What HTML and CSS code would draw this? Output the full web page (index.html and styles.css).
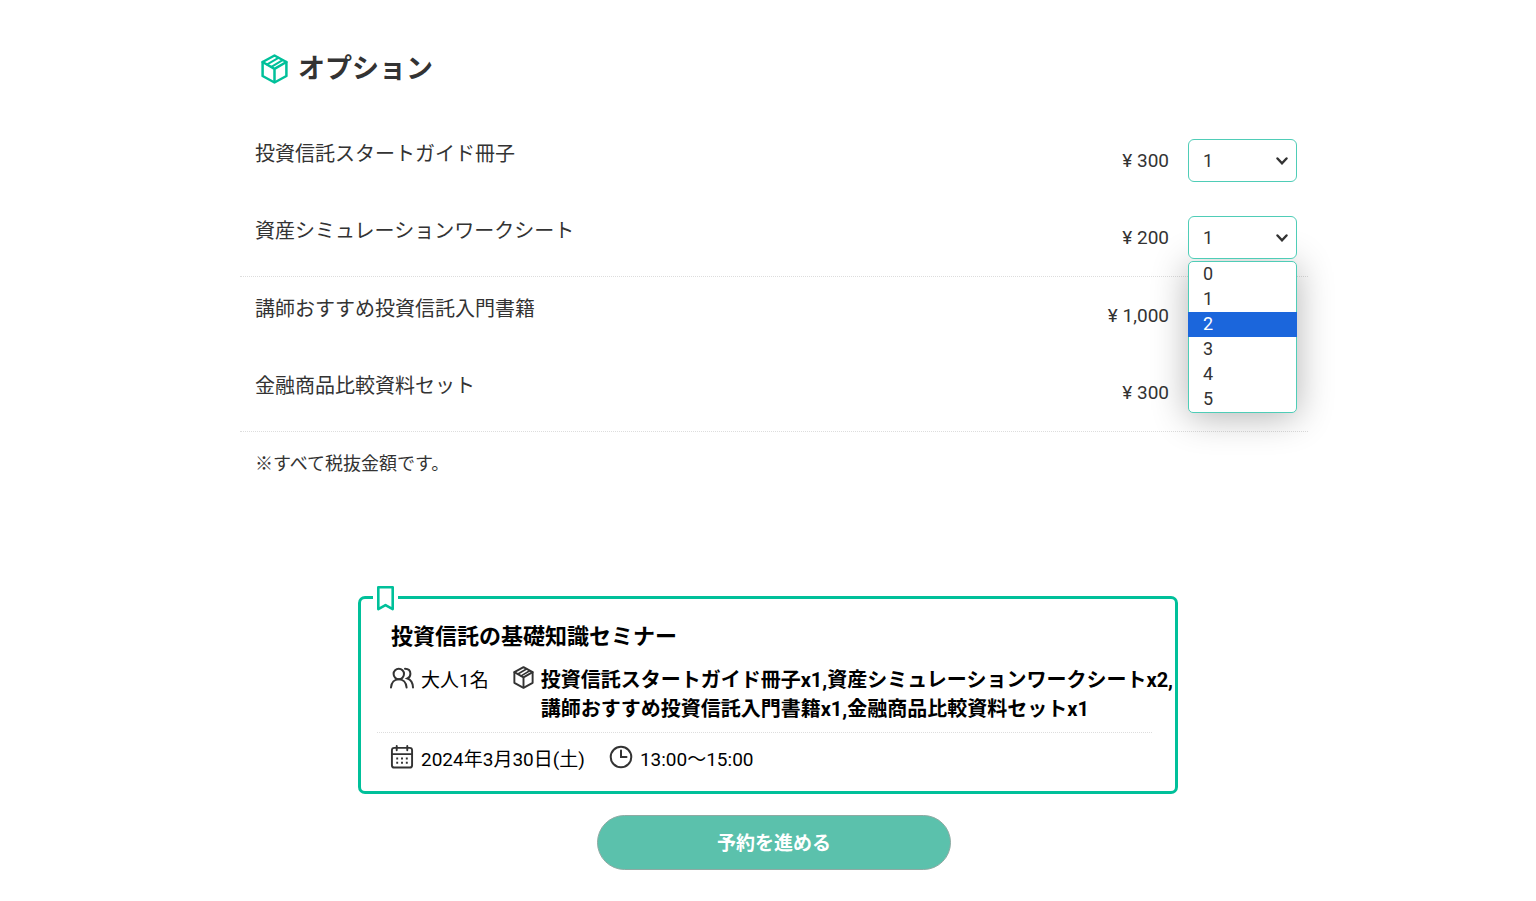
FILE: index.html
```html
<!DOCTYPE html>
<html lang="ja">
<head>
  <meta charset="UTF-8">
  <meta name="viewport" content="width=device-width, initial-scale=1.0">
  <title>オプション</title>
  <link rel="stylesheet" href="styles.css">
</head>
<body>
  <svg class="sprite" width="0" height="0" aria-hidden="true">
    <symbol id="box" viewBox="0 0 27 30">
      <g fill="none" stroke="currentColor" stroke-width="2.5" stroke-linejoin="round" stroke-linecap="round">
        <path d="M13.5 1.5 25.4 8v14L13.5 28.5 1.6 22V8z"/>
        <path d="M1.6 8l11.9 6.8L25.4 8M13.5 14.8v13"/>
        <path stroke-width="2" d="M6.2 10.4 17.400 3.900M10.400 12.800 21.600 6.200"/>
      </g>
    </symbol>
  </svg>

  <main>
    <section class="options">
      <h1>
        <svg class="title-icon" aria-hidden="true"><use href="#box"/></svg>
        オプション
      </h1>
      <ul class="option-list">
        <li>
          <label class="name" for="guide">投資信託スタートガイド冊子</label>
          <span class="price">¥ 300</span>
          <div class="quantity">
            <select id="guide">
              <option>0</option>
              <option selected>1</option>
              <option>2</option>
              <option>3</option>
              <option>4</option>
              <option>5</option>
            </select>
            <svg class="arrow" viewBox="0 0 12 8" aria-hidden="true"><path d="M1.5 1.5 6 6.3l4.5-4.8"/></svg>
          </div>
        </li>
        <li>
          <label class="name" for="worksheet">資産シミュレーションワークシート</label>
          <span class="price">¥ 200</span>
          <div class="quantity">
            <select id="worksheet">
              <option>0</option>
              <option selected>1</option>
              <option>2</option>
              <option>3</option>
              <option>4</option>
              <option>5</option>
            </select>
            <svg class="arrow" viewBox="0 0 12 8" aria-hidden="true"><path d="M1.5 1.5 6 6.3l4.5-4.8"/></svg>
            <ul class="menu" role="listbox" aria-label="数量">
              <li role="option">0</li>
              <li role="option">1</li>
              <li role="option" class="active" aria-selected="true">2</li>
              <li role="option">3</li>
              <li role="option">4</li>
              <li role="option">5</li>
            </ul>
          </div>
        </li>
        <li>
          <span class="name">講師おすすめ投資信託入門書籍</span>
          <span class="price">¥ 1,000</span>
        </li>
        <li>
          <span class="name">金融商品比較資料セット</span>
          <span class="price">¥ 300</span>
        </li>
      </ul>
      <p class="note">※すべて税抜金額です。</p>
    </section>

    <section class="summary">
      <span class="bookmark">
        <svg viewBox="0 0 17 25" aria-hidden="true"><path d="M1.3 1.3h14.4v21.8l-7.2-4-7.2 4z"/></svg>
      </span>
      <h2>投資信託の基礎知識セミナー</h2>
      <div class="row">
        <div class="item people">
          <svg class="icon" viewBox="0 0 24 24" aria-hidden="true">
            <circle cx="8.800" cy="8" r="5.200"/>
            <path d="M1 21.500c.4-5 3.600-8.300 7.800-8.300s7.400 3.300 7.800 8.300M15 2.800c3.500 0 5.400 2.200 5.400 5 0 2.200-1.200 3.900-3 4.700 3.400 1.200 5.400 4.500 5.600 9"/>
          </svg>
          <span>大人1名</span>
        </div>
        <div class="item">
          <svg class="icon box" aria-hidden="true"><use href="#box"/></svg>
          <strong>投資信託スタートガイド冊子x1,資産シミュレーションワークシートx2,講師おすすめ投資信託入門書籍x1,金融商品比較資料セットx1</strong>
        </div>
      </div>
      <div class="row schedule">
        <div class="item">
          <svg class="icon" viewBox="0 0 24 25" aria-hidden="true">
            <rect x="1.5" y="3" width="21" height="20.5" rx="2.5"/>
            <path d="M2 9.5h20M6.5 1v4.5M17.5 1v4.5"/>
            <path class="dots" d="M6 14h2m3 0h2m3 0h2M6 18.5h2m3 0h2m3 0h2"/>
          </svg>
          <span>2024年3月30日(土)</span>
        </div>
        <div class="item">
          <svg class="icon" viewBox="0 0 24 24" aria-hidden="true">
            <circle cx="12" cy="12" r="10.3"/>
            <path d="M12 5.5V12h5.5"/>
          </svg>
          <span>13:00〜15:00</span>
        </div>
      </div>
    </section>

    <div class="actions">
      <button type="button">予約を進める</button>
    </div>
  </main>
</body>
</html>
```

FILE: styles.css
```css
* {
  box-sizing: border-box;
}

body {
  margin: 0;
  background-color: #fff;
  color: #333;
  font-family: Roboto, "Noto Sans CJK JP", sans-serif;
  font-size: 20px;
  line-height: 30px;
}

h1, h2, p, ul {
  margin: 0;
  padding: 0;
}

ul {
  list-style: none;
}

.sprite {
  position: absolute;
}

main {
  padding-top: 49px;
}

.options,
.actions {
  max-width: 1080px;
  margin: 0 auto;
  padding-left: 12px;
}

h1 {
  display: flex;
  align-items: center;
  gap: 10px;
  margin-bottom: 33px;
  padding-left: 21px;
  font-size: 27px;
  line-height: 40px;
}

.title-icon {
  width: 27px;
  height: 30px;
  color: #00c09a;
}

/* option rows */
.option-list > li {
  display: grid;
  grid-template-columns: 1fr auto 109px;
  column-gap: 19px;
  min-height: 77px;
  padding: 17px 11px 17px 15px;
}

.option-list > li:nth-child(even) {
  min-height: 78px;
  border-bottom: 1px dotted #ddd;
}

.price {
  align-self: center;
  font-size: 19px;
}

.quantity {
  position: relative;
  height: 43px;
}

select {
  position: relative;
  z-index: 2;
  display: block;
  width: 100%;
  height: 43px;
  padding: 0 14px;
  border: 1px solid #4fcdb7;
  border-radius: 6px;
  background-color: #fff;
  color: #333;
  font-family: inherit;
  font-size: 18px;
  appearance: none;
}

.arrow {
  position: absolute;
  top: 18px;
  right: 9px;
  z-index: 3;
  width: 12px;
  height: 8px;
  fill: none;
  stroke: #333;
  stroke-width: 2.4;
  stroke-linecap: round;
  pointer-events: none;
}

.menu {
  position: absolute;
  top: 45px;
  left: 0;
  z-index: 1;
  width: 100%;
  border: 1px solid #4fcdb7;
  border-radius: 5px;
  background-color: #fff;
  box-shadow: 0 4px 36px rgba(0, 0, 0, 0.3);
  font-size: 18px;
}

.menu li {
  height: 25px;
  padding-left: 14px;
  line-height: 24px;
}

.menu .active {
  margin: 0 -1px;
  padding-left: 15px;
  background-color: #1b66dc;
  color: #fff;
}

.note {
  margin-top: 17px;
  padding-left: 15px;
  font-size: 18px;
}

/* reservation summary */
.summary {
  position: relative;
  max-width: 820px;
  margin: 117px auto 0;
  padding: 22px 0 17px 16px;
  border: 3px solid #00c09a;
  border-radius: 7px;
  color: #000;
}

.bookmark {
  position: absolute;
  top: -13px;
  left: 12px;
  display: flex;
  padding: 0 4px;
  background-color: #fff;
}

.bookmark svg {
  width: 17px;
  height: 25px;
  fill: none;
  stroke: #00c09a;
  stroke-width: 2.6;
  stroke-linejoin: round;
}

h2 {
  margin-bottom: 13px;
  padding-left: 14px;
  font-size: 22px;
  line-height: 32px;
}

.row {
  display: flex;
  gap: 24px;
  padding-left: 13px;
  font-size: 19px;
  line-height: 29px;
}

.item {
  display: flex;
  gap: 7px;
}

.item strong {
  font-size: 20px;
}

.people {
  flex-shrink: 0;
}

.schedule {
  margin-top: 8px;
  margin-right: 23px;
  padding-top: 12px;
  border-top: 1px dotted #ddd;
}

.icon {
  flex-shrink: 0;
  width: 24px;
  height: 24px;
  color: #333;
  fill: none;
  stroke: #333;
  stroke-width: 2;
  stroke-linecap: round;
}

.icon.box {
  width: 21px;
  height: 23px;
}

.dots {
  stroke-linecap: butt;
}

.actions {
  display: flex;
  justify-content: center;
  margin-top: 21px;
}

button {
  width: 354px;
  height: 55px;
  padding: 0 0 3px;
  border: 1px solid #8faaa3;
  border-radius: 28px;
  background-color: #5bc1ac;
  color: #fff;
  font-family: inherit;
  font-size: 19px;
  font-weight: bold;
  cursor: pointer;
}
```
